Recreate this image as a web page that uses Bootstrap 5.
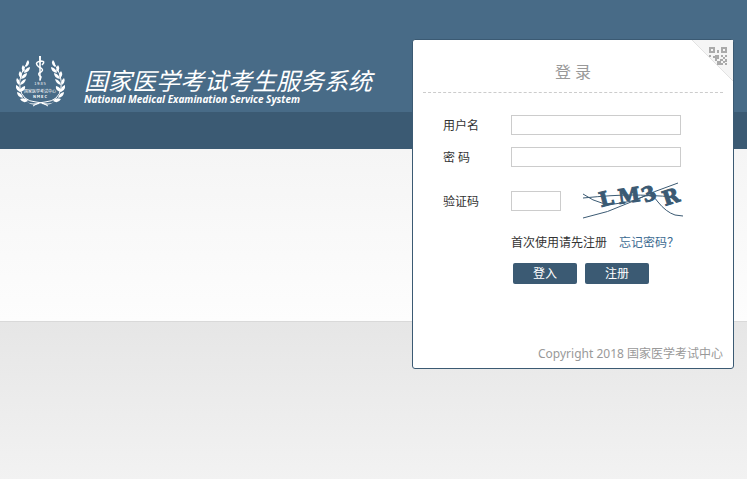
<!DOCTYPE html>
<html lang="zh-CN">
<head>
<meta charset="utf-8">
<meta name="viewport" content="width=device-width, initial-scale=1">
<title>国家医学考试考生服务系统</title>
<link rel="stylesheet" href="https://cdn.jsdelivr.net/npm/bootstrap@5.3.0/dist/css/bootstrap.min.css">
<style>
  body {
    font-family: "Noto Sans", "Noto Sans CJK SC", sans-serif;
    font-size: 12px;
    line-height: 20px;
    color: #333;
    background:
      linear-gradient(#486b87, #486b87) 0 0 / 100% 112px no-repeat,
      linear-gradient(#3b5a73, #3b5a73) 0 112px / 100% 37px no-repeat,
      linear-gradient(#f5f5f5, #fdfdfd) 0 149px / 100% 172px no-repeat,
      linear-gradient(#d9d9d9, #d9d9d9) 0 321px / 100% 1px no-repeat,
      linear-gradient(#e6e6e6, #f2f2f2) 0 322px / 100% 158px no-repeat,
      #f2f2f2;
  }
  .page { padding: 39px 13px 24px 16px; }
  .brand { gap: 19px; padding-top: 17px; }
  .brand-title { font-family: "Noto Sans CJK SC", sans-serif; font-size: 24px; line-height: 26px; padding-top: 11px; font-style: italic; font-weight: 400; }
  .brand-sub { font-family: "Noto Sans", sans-serif; font-size: 10px; line-height: 12px; font-style: italic; font-weight: 700; }
  .login { width: 322px; min-height: 330px; border: 1px solid #3b5a73; border-radius: 3px; padding: 0 10px 4px; }
  .login-title { font-size: 16px; line-height: 24px; color: #999; padding: 20px 0 8px; border-bottom: 1px dashed #ccc; }
  .login-form { padding: 22px 20px 0; }
  .field-label { width: 68px; line-height: 18px; padding-top: 2px; }
  .field { height: 20px; border: 1px solid #ccc; padding: 0 4px; font-size: 12px; }
  .field-long { width: 170px; }
  .field-code { width: 50px; }
  .row-line { margin-bottom: 12px; }
  .row-code { margin-bottom: 10px; }
  .captcha { margin-left: 22px; }
  .captcha text { font: bold 20px "DejaVu Serif", serif; stroke: #3b5a73; stroke-width: 1px; }
  .after-label { margin-left: 68px; }
  .forgot { color: #3b6a91; }
  .actions { gap: 8px; padding: 10px 0 0 2px; }
  .btn-login { --bs-btn-bg: #3b5a73; --bs-btn-color: #fff; --bs-btn-hover-bg: #486b87; --bs-btn-hover-color: #fff; width: 64px; height: 21px; padding: 0; border: 0; border-radius: 2px; font-size: 12px; line-height: 21px; }
  .copyright { color: #999; }
  .emblem text { font-family: "Noto Sans CJK SC", sans-serif; text-anchor: middle; }
</style>
<script src="https://cdn.jsdelivr.net/npm/bootstrap@5.3.0/dist/js/bootstrap.bundle.min.js"></script>
</head>
<body>
<div class="page d-flex flex-wrap justify-content-between align-items-start">
  <header class="brand d-flex text-white">
    <svg class="emblem" width="49" height="52" viewBox="0 0 49 52" fill="#fff" role="img" aria-label="NMEC">
      <defs>
        <g id="branch">
          <path d="M12 6Q2 19 4 32Q6 45 20 46Q27 46 32 50" fill="none" stroke="#fff" stroke-width="1"/>
          <path d="M12 4q3 4-2 7q-1-4 2-7zM7 9q3 4 1 7q-4-3-1-7zM14 11q0 5-6 6q1-5 6-6zM4 15q3 3 1 7q-4-3-1-7zM11 17q0 5-6 6q1-5 6-6zM1 22q4 3 2 7q-4-3-2-7zM10 23q-1 5-6 6q1-5 6-6zM0 29q5 2 4 7q-5-2-4-7zM9 30q1 5-5 6q0-5 5-6zM1 36q5 1 6 6q-6-1-6-6zM4 43q6-2 8 2q-5 3-8-2z"/>
          <path d="M11 46q6 3 13 0l-1 2q-7 2-12-2z"/>
        </g>
      </defs>
      <use href="#branch"/>
      <use href="#branch" transform="translate(49 0) scale(-1 1)"/>
      <path d="M23 0h2l-.5 25h-1z"/>
      <path d="M26 9q4-4-1-4q-6 1-4 4q1 2 4 3q3 2 0 4q-3 1-2 3l2 2-1 3" fill="none" stroke="#fff" stroke-width="1.500"/>
      <text x="24" y="29" font-size="4">1 9 8 5</text>
      <text x="24" y="37" font-size="4">国家医学考试中心</text>
      <text x="24" y="42" font-size="4" font-weight="700">N M E C</text>
    </svg>
    <div>
      <h1 class="brand-title m-0">国家医学考试考生服务系统</h1>
      <p class="brand-sub m-0">National Medical Examination Service System</p>
    </div>
  </header>

  <main class="login bg-white position-relative d-flex flex-column ms-auto">
    <a href="#qr" class="position-absolute top-0 end-0 d-flex" aria-label="二维码登录">
      <svg width="41" height="41" viewBox="0 0 41 41">
        <defs><clipPath id="corner"><path d="M0 0H41V41z"/></clipPath></defs>
        <path d="M0 0H41V41z" fill="#f5f5f5"/>
        <path d="M0 0L41 41" stroke="#e2e2e2"/>
        <g clip-path="url(#corner)" fill="#aaa">
          <path fill-rule="evenodd" d="M17 7h6v6h-6zM19 9v2h2V9zM29 7h6v6h-6zM31 9v2h2V9z"/>
          <path d="M25 10h2v3h-2zM17 15h2v2h-2zM21 16h2v-1h4v4h-2v2h-2v-3h-2zM29 15h2v2h-2zM33 15h2v2h-2zM31 17h2v2h-2zM28 19h3v2h-3zM33 19h2v3h-2zM25 21h4v2h2v2h-6zM31 21h2v2h-2zM33 23h2v2h-2z"/>
        </g>
      </svg>
    </a>
    <h2 class="login-title text-center fw-normal m-0">登 录</h2>
    <form class="login-form" onsubmit="return false">
      <div class="row-line d-flex align-items-center">
        <label class="field-label" for="user">用户名</label>
        <input class="field field-long" id="user" type="text">
      </div>
      <div class="row-line d-flex align-items-center">
        <label class="field-label" for="pass">密 码</label>
        <input class="field field-long" id="pass" type="password">
      </div>
      <div class="row-code d-flex align-items-center">
        <label class="field-label" for="code">验证码</label>
        <input class="field field-code" id="code" type="text">
        <svg class="captcha" width="102" height="44" viewBox="0 0 102 44" fill="#3b5a73" role="img" aria-label="验证码图片">
          <text transform="translate(18 28) rotate(-14)">L</text>
          <text transform="translate(36 25) rotate(-8)">M</text>
          <text transform="translate(62 24) rotate(-22)">3</text>
          <text transform="translate(82 27) rotate(-18)">R</text>
          <g fill="none" stroke="#3b5a73">
            <path d="M0 39Q25 34 48 23T95 4"/>
            <path d="M0 19Q30 16 48 16T92 18"/>
            <path d="M0 15Q20 29 38 24Q50 23 62 17Q70 15 75 23Q83 33 92 36L100 37"/>
          </g>
        </svg>
      </div>
      <div class="after-label">
        <div class="d-flex">
          <span class="me-2 pe-1">首次使用请先注册</span>
          <a class="forgot text-decoration-none" href="#forgot">忘记密码？</a>
        </div>
        <div class="actions d-flex">
          <button class="btn btn-login" type="submit">登入</button>
          <button class="btn btn-login" type="button">注册</button>
        </div>
      </div>
    </form>
    <footer class="copyright mt-auto text-end">Copyright 2018 国家医学考试中心</footer>
  </main>
</div>
</body>
</html>
